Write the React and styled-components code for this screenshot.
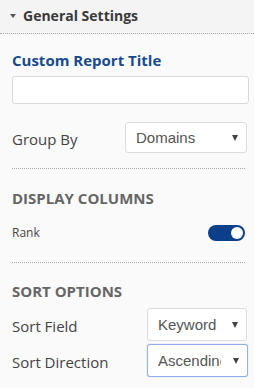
import React from "react";
import styled, { createGlobalStyle } from "styled-components";

const Global = createGlobalStyle`
  html, body { margin: 0; padding: 0; background: #fafafa; }
  body { font-family: "Open Sans", sans-serif; }
  * { box-sizing: border-box; }
`;

const Panel = styled.div`
  width: 254px;
  height: 388px;
  background: #fafafa;
  overflow: hidden;
`;

const Header = styled.div`
  height: 34px;
  display: flex;
  align-items: center;
  gap: 7px;
  padding: 0 0 2px 10px;
  background: #f4f4f4;
  border-bottom: 1px dotted #aaa;
  font-size: 14px;
  font-weight: 700;
  color: #3a3a3a;
`;

const Caret = styled.span`
  width: 0;
  height: 0;
  border-left: 3.5px solid transparent;
  border-right: 3.5px solid transparent;
  border-top: 4px solid #555;
`;

const Body = styled.div`
  padding: 0 6px 0 12px;
`;

const Title = styled.div`
  margin-top: 16px;
  font-size: 15px;
  font-weight: 700;
  color: #194a8c;
  line-height: 20px;
`;

const TextInput = styled.div`
  margin-top: 6px;
  width: 237px;
  height: 28px;
  background: #fff;
  border: 1px solid #d9d9d9;
  border-radius: 3px;
`;

const Row = styled.div`
  display: flex;
  align-items: center;
  justify-content: space-between;
  margin-top: ${(p) => p.$mt || 0}px;
  padding-right: ${(p) => p.$pr || 0}px;
`;

const Label = styled.span`
  font-size: ${(p) => (p.$small ? 12 : 15)}px;
  line-height: 20px;
  color: #444;
  margin-top: ${(p) => p.$off || 0}px;
`;

const Select = styled.div`
  width: ${(p) => p.$w}px;
  height: ${(p) => p.$h || 32}px;
  display: flex;
  align-items: center;
  justify-content: space-between;
  padding: 0 8px 0 10px;
  background: #fff;
  border: 1px solid ${(p) => (p.$focus ? "#8fb0e8" : "#dcdcdc")};
  border-radius: 3px;
  font-family: "Liberation Sans", Arial, sans-serif;
  font-size: 15px;
  color: #555;
  box-shadow: ${(p) => (p.$focus ? "0 0 1px #8fb0e8" : "none")};
`;

const SelectText = styled.span`
  white-space: nowrap;
  overflow: hidden;
  max-width: ${(p) => p.$max || 200}px;
`;

const SelArrow = styled.span`
  flex: none;
  width: 0;
  height: 0;
  border-left: 3.5px solid transparent;
  border-right: 3.5px solid transparent;
  border-top: 6px solid #444;
`;

const Divider = styled.div`
  margin-top: ${(p) => p.$mt}px;
  width: 233px;
  border-top: 1px dotted #aaa;
`;

const Section = styled.div`
  margin-top: ${(p) => p.$mt}px;
  font-size: 15px;
  font-weight: 700;
  color: #666;
  line-height: 20px;
`;

const Toggle = styled.div`
  width: 37px;
  height: 16px;
  border-radius: 8px;
  background: #0b3f8a;
  display: flex;
  align-items: center;
  justify-content: flex-end;
  padding-right: 2px;
`;

const Knob = styled.div`
  width: 12px;
  height: 12px;
  border-radius: 50%;
  background: #fff;
`;

function Dropdown({ value, w, focus, max, h }) {
  return (
    <Select $w={w} $focus={focus} $h={h}>
      <SelectText $max={max}>{value}</SelectText>
      <SelArrow />
    </Select>
  );
}

export default function App() {
  return (
    <Panel>
      <Global />
      <Header>
        <Caret />
        General Settings
      </Header>
      <Body>
        <Title>Custom Report Title</Title>
        <TextInput />
        <Row $mt={18} $pr={1}>
          <Label $off={3}>Group By</Label>
          <Dropdown value="Domains" w={122} h={31} />
        </Row>
        <Divider $mt={15} />
        <Section $mt={19}>DISPLAY COLUMNS</Section>
        <Row $mt={15} $pr={3}>
          <Label $small>Rank</Label>
          <Toggle>
            <Knob />
          </Toggle>
        </Row>
        <Divider $mt={19} />
        <Section $mt={18}>SORT OPTIONS</Section>
        <Row $mt={7} $pr={1}>
          <Label $off={2}>Sort Field</Label>
          <Dropdown value="Keyword" w={100} h={33} />
        </Row>
        <Row $mt={3}>
          <Label $off={3}>Sort Direction</Label>
          <Dropdown value="Ascending" w={101} h={33} focus max={63} />
        </Row>
      </Body>
    </Panel>
  );
}
